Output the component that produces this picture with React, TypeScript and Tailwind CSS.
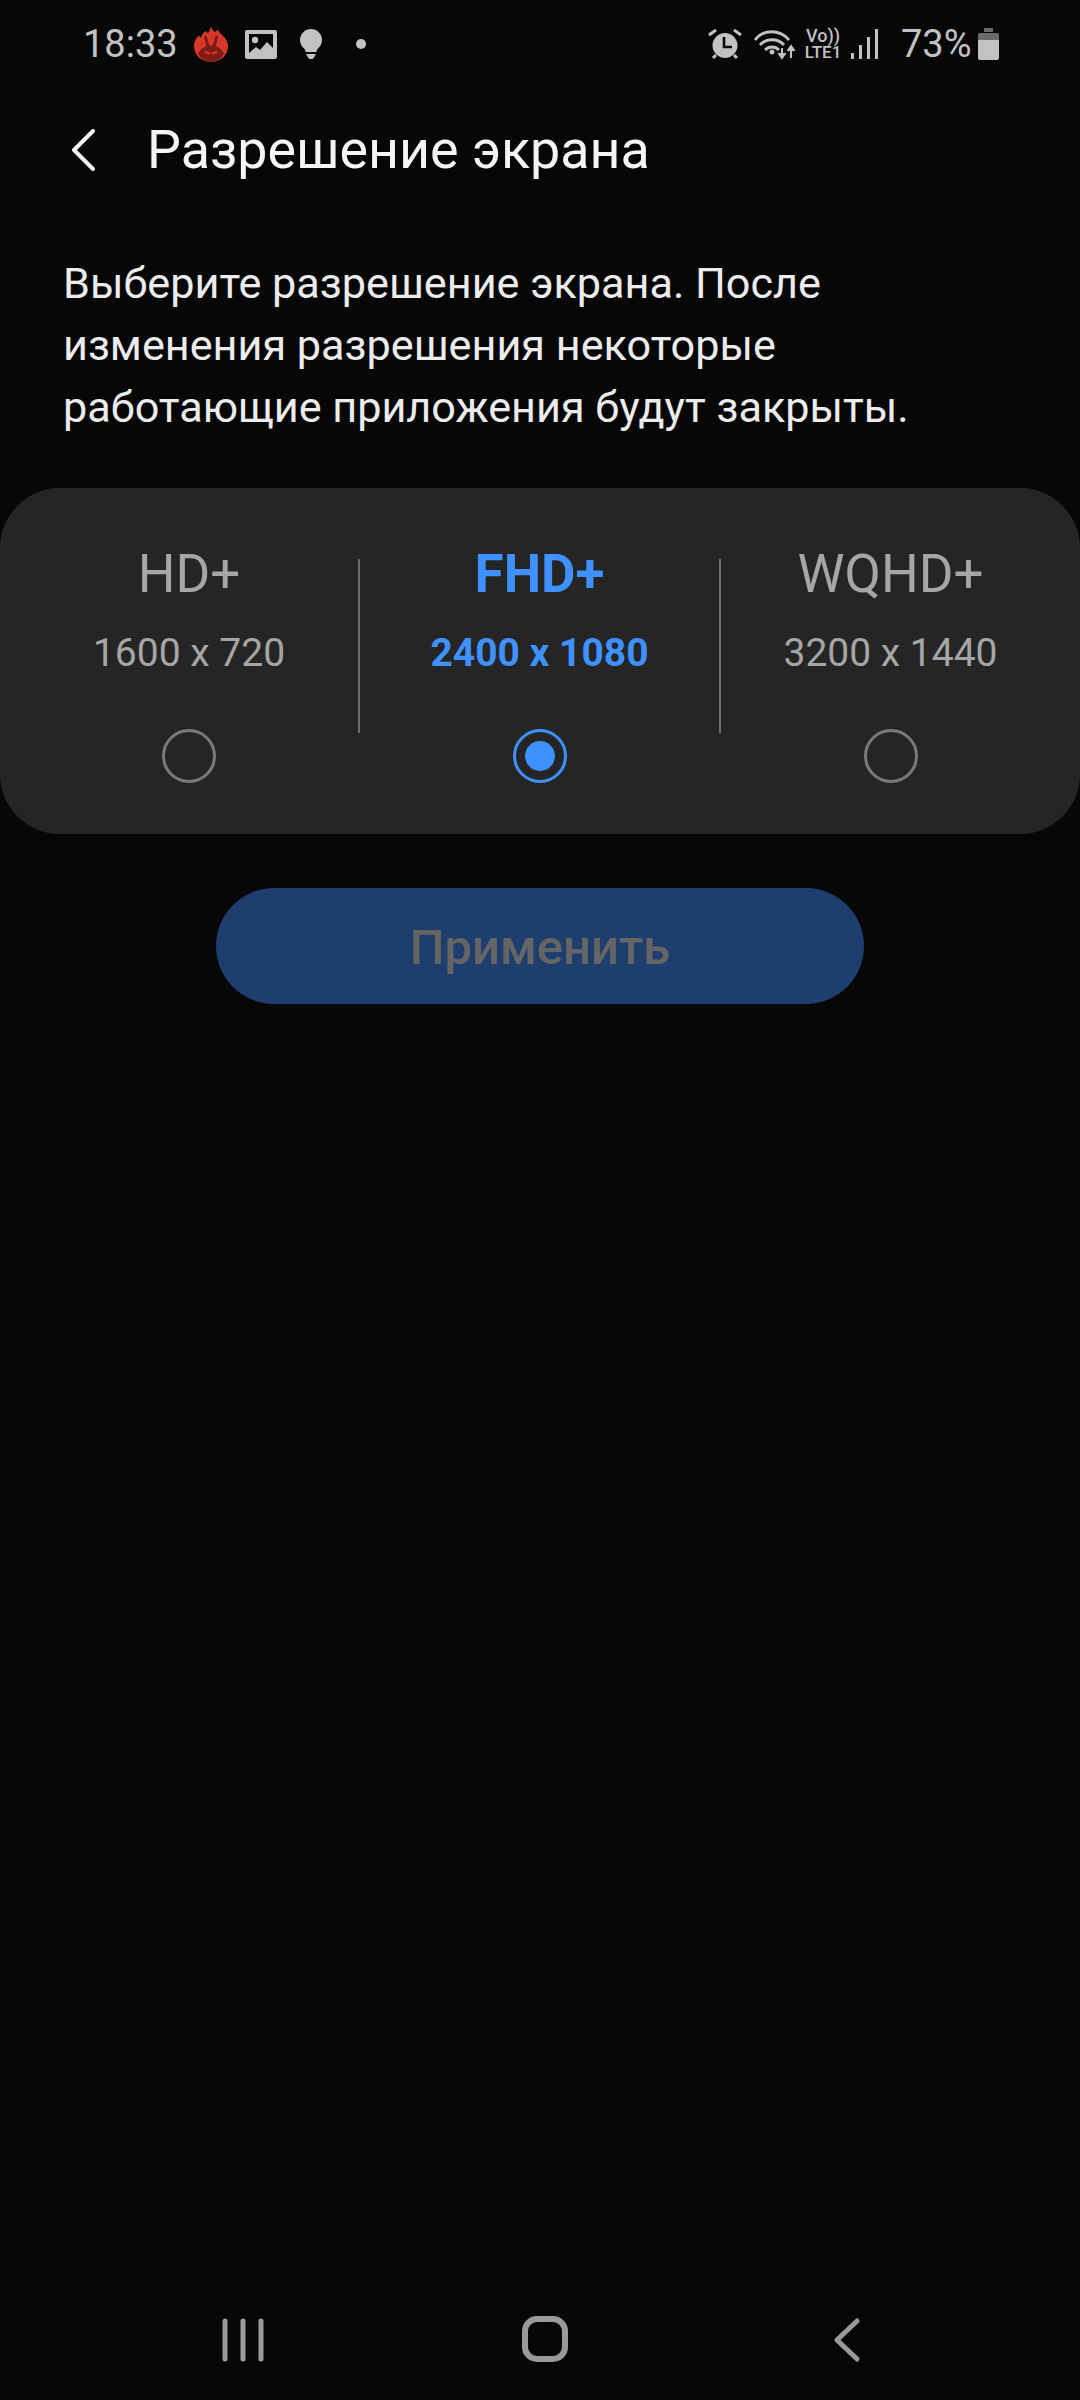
import React from "react";

const options = [
    { name: "HD+", size: "1600 x 720", active: false },
    { name: "FHD+", size: "2400 x 1080", active: true },
    { name: "WQHD+", size: "3200 x 1440", active: false },
];

function AntutuIcon() {
    return (
        <svg width="34" height="36" viewBox="0 0 34 36">
            <path d="M17 0c.5 3 2 4 3.500 6 1.500-.5 3-1.500 3.500-3 .5 2.500 2 4 4 6 3.500 3 6 6.500 6 11 0 9-7.500 16-17 16S0 29 0 20c0-4.500 2-8 5-10.500.5 1 1 1.500 2 2 .5-3 2.500-5 5-6.500.5 1 1 1.500 2 2 1.500-2 2.500-4 3-7z" fill="#d9372a" />
            <path d="M4 27.500C7 22 11.500 19.500 17 19.500S27 22 30 27.500C27 32.500 22.500 36 17 36S7 32.500 4 27.500z" fill="#7e1c17" />
            <path d="M11.500 11l2.500 10M22.500 11L20 21" stroke="#7e1c17" strokeWidth="3" strokeLinecap="round" />
            <path d="M11.500 26l4 1.500M22.500 26l-4 1.500" stroke="#d9372a" strokeWidth="2" strokeLinecap="round" />
        </svg>
    );
}

function PictureIcon() {
    return (
        <svg width="32" height="29" viewBox="0 0 32 29">
            <path fillRule="evenodd" d="M2 0h28a2 2 0 0 1 2 2v25a2 2 0 0 1-2 2H2a2 2 0 0 1-2-2V2a2 2 0 0 1 2-2zm2 4v21h24V4z" fill="#c2c2c2" />
            <circle cx="10" cy="10" r="3.200" fill="#c2c2c2" />
            <path d="M4 23l7-6 4 3 7-8 6 6v9H4z" fill="#c2c2c2" />
        </svg>
    );
}

function BulbIcon() {
    return (
        <svg width="22" height="30" viewBox="0 0 22 30">
            <path d="M11 0a11 11 0 0 1 11 11c0 4-2 6.500-4 8.500-1 1-1.500 2-1.500 3.500h-11c0-1.500-.5-2.500-1.500-3.500C2 17.500 0 15 0 11A11 11 0 0 1 11 0z" fill="#c2c2c2" />
            <path d="M6 25h10l-2 3.500c-.5 1-1.500 1.500-3 1.500s-2.500-.5-3-1.500z" fill="#c2c2c2" />
        </svg>
    );
}

function AlarmIcon() {
    return (
        <svg width="34" height="31" viewBox="0 0 34 31">
            <circle cx="17" cy="16.500" r="12.500" fill="#c2c2c2" />
            <path d="M16 8v10h8" fill="none" stroke="#070707" strokeWidth="2.600" />
            <path d="M1 6l7-5M33 6l-7-5M5 29l3-3M29 29l-3-3" stroke="#c2c2c2" strokeWidth="3" />
        </svg>
    );
}

function WifiIcon() {
    return (
        <svg width="42" height="31" viewBox="0 0 42 31">
            <g fill="none" stroke="#c2c2c2" strokeWidth="2.800">
                <path d="M1 11C9 0 26 0 35 11" />
                <path d="M6 16c6-7 18-7 24 0" />
                <path d="M11 21c4-4 10-4 14 0" />
            </g>
            <circle cx="18" cy="23" r="2.500" fill="#c2c2c2" />
            <path d="M28 19v9M24.500 24l3.500 5 3.500-5" fill="#c2c2c2" stroke="#c2c2c2" strokeWidth="2" />
            <path d="M37 29v-10M33.500 22l3.500-5 3.500 5" fill="#c2c2c2" stroke="#c2c2c2" strokeWidth="2" />
        </svg>
    );
}

function SignalIcon() {
    return (
        <svg width="27" height="30" viewBox="0 0 27 30">
            <path d="M0 24h3v6H0zM8 16h3v14H8zM16 8h3v22h-3zM24 0h3v30h-3z" fill="#c2c2c2" />
        </svg>
    );
}

function BatteryIcon() {
    return (
        <svg width="21" height="32" viewBox="0 0 21 32">
            <path d="M6 0h9v4h-9z" fill="#6a6a6a" />
            <path d="M2 5h17a2 2 0 0 1 2 2v5H0V7a2 2 0 0 1 2-2z" fill="#6a6a6a" />
            <path d="M0 12h21v18a2 2 0 0 1-2 2H2a2 2 0 0 1-2-2z" fill="#c2c2c2" />
        </svg>
    );
}

function StatusBar() {
    return (
        <div className="flex h-[88px] items-center justify-between pl-[83px] pr-[81px] text-[38px] text-[#c2c2c2]">
            <div className="flex items-center">
                <span className="w-[111px]">18:33</span>
                <AntutuIcon />
                <div className="ml-[17px] flex items-center"><PictureIcon /></div>
                <div className="ml-[23px] flex items-center"><BulbIcon /></div>
                <div className="ml-[34px] h-[10px] w-[10px] rounded-full bg-[#c2c2c2]" />
            </div>
            <div className="flex items-center">
                <AlarmIcon />
                <div className="ml-[12px] flex items-center"><WifiIcon /></div>
                <div className="ml-[7px] flex w-[40px] flex-col items-center font-medium leading-none">
                    <span className="text-[18px] leading-[16px]">Vo))</span>
                    <span className="text-[17px] leading-[16px]">LTE1</span>
                </div>
                <div className="ml-[8px] flex items-center"><SignalIcon /></div>
                <span className="ml-[23px] w-[77px]">73%</span>
                <BatteryIcon />
            </div>
        </div>
    );
}

export default function App() {
    return (
        <div className="flex h-[2400px] w-[1080px] flex-col bg-[#070707] font-['Roboto',sans-serif]">
            <StatusBar />

            <div className="mt-[12px] flex h-[100px] items-center pl-[71px]">
                <svg width="24" height="42" viewBox="0 0 24 42" fill="none">
                    <path d="M22 2L3 21l19 19" stroke="#f5f5f5" strokeWidth="4" strokeLinecap="round" strokeLinejoin="round" />
                </svg>
                <span className="ml-[52px] text-[53.8px] text-[#f5f5f5]">Разрешение экрана</span>
            </div>

            <p className="mt-[53px] px-[63px] text-[43.2px] leading-[62px] text-[#ececec]">
                Выберите разрешение экрана. После<br />
                изменения разрешения некоторые<br />
                работающие приложения будут закрыты.
            </p>

            <div className="mt-[49px] grid h-[346px] grid-cols-[338px_2px_359px_2px_339px] rounded-[60px] bg-[#252525] px-5">
                {options.map((o, i) => (
                    <React.Fragment key={o.name}>
                        {i > 0 && <div className="mt-[71px] h-[174px] bg-[#6e6e6e]" />}
                        <div className={`flex flex-col items-center pt-[56px] ${o.active ? "font-bold text-[#3e91ff]" : "text-[#a6a6a6]"}`}>
                            <span className="text-[53px] leading-[60px]">{o.name}</span>
                            <span className="mt-[27px] text-[39px] leading-[44px]">{o.size}</span>
                            <div className={`mt-[54px] flex h-[54px] w-[54px] items-center justify-center rounded-full border-[3px] ${o.active ? "border-[#3e91ff]" : "border-[#7a7a7a]"}`}>
                                {o.active && <div className="h-[30px] w-[30px] rounded-full bg-[#3e91ff]" />}
                            </div>
                        </div>
                    </React.Fragment>
                ))}
            </div>

            <div className="mx-[216px] mt-[54px] flex h-[116px] items-center justify-center rounded-full bg-[#1e3f6e] pt-[3px] text-[49px] font-medium text-[#656565]">
                Применить
            </div>

            <div className="mt-auto flex h-[82px] items-start pb-[38px] pl-[222px]">
                <svg width="42" height="44" viewBox="0 0 42 44">
                    <path d="M3 3v38M21 3v38M39 3v38" stroke="#9a9a9a" strokeWidth="5" strokeLinecap="round" />
                </svg>
                <svg className="ml-[258px] -mt-[2px]" width="46" height="46" viewBox="0 0 46 46" fill="none">
                    <rect x="3" y="3" width="40" height="40" rx="12" stroke="#9a9a9a" strokeWidth="6" />
                </svg>
                <svg className="ml-[266px]" width="26" height="44" viewBox="0 0 26 44" fill="none">
                    <path d="M23 3L3 22l20 19" stroke="#9a9a9a" strokeWidth="5" strokeLinecap="round" strokeLinejoin="round" />
                </svg>
            </div>
        </div>
    );
}
